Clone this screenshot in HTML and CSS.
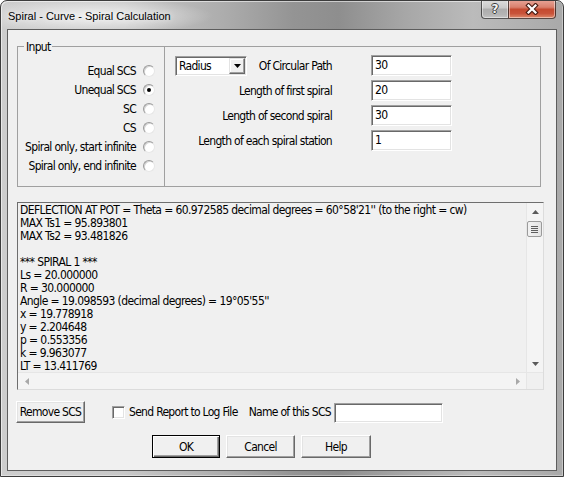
FILE: index.html
```html
<!DOCTYPE html>
<html>
<head>
<meta charset="utf-8">
<title>Spiral - Curve - Spiral Calculation</title>
<link rel="stylesheet" href="styles.css">
</head>
<body>
<div class="window">
  <div class="titlebar">
    <div class="title">Spiral - Curve - Spiral Calculation</div>
    <div class="caption-btns">
      <div class="cbtn cbtn-help"><span class="qmark">?</span></div>
      <div class="cbtn cbtn-close">
        <svg width="14" height="12" viewBox="0 0 14 12"><path d="M3.5 2.5 L10.5 9.5 M10.5 2.5 L3.5 9.5" stroke="#4a1d14" stroke-width="4.4" stroke-linecap="square"/><path d="M3.5 2.5 L10.5 9.5 M10.5 2.5 L3.5 9.5" stroke="#ffffff" stroke-width="2.2" stroke-linecap="square"/></svg>
      </div>
    </div>
  </div>
  <div class="client">
    <div class="group">
      <span class="legend">Input</span>
      <div class="radios">
        <div class="radio-row"><span>Equal SCS</span><i class="radio"></i></div>
        <div class="radio-row"><span>Unequal SCS</span><i class="radio checked"></i></div>
        <div class="radio-row"><span>SC</span><i class="radio"></i></div>
        <div class="radio-row"><span>CS</span><i class="radio"></i></div>
        <div class="radio-row"><span>Spiral only, start infinite</span><i class="radio"></i></div>
        <div class="radio-row"><span>Spiral only, end infinite</span><i class="radio"></i></div>
      </div>
      <div class="params">
        <div class="param-label first">
          <div class="combo"><span class="combo-text">Radius</span><span class="combo-btn"><svg width="7" height="4" viewBox="0 0 7 4"><polygon points="0,0 7,0 3.5,4" fill="#000"/></svg></span></div>
          <span>Of Circular Path</span>
        </div>
        <div class="edit">30</div>
        <div class="param-label">Length of first spiral</div>
        <div class="edit">20</div>
        <div class="param-label">Length of second spiral</div>
        <div class="edit">30</div>
        <div class="param-label">Length of each spiral station</div>
        <div class="edit">1</div>
      </div>
    </div>

    <div class="log">
      <div class="log-text">DEFLECTION AT POT = Theta = 60.972585 decimal degrees = 60°58'21'' (to the right = cw)
MAX Ts1 = 95.893801
MAX Ts2 = 93.481826

*** SPIRAL 1 ***
Ls = 20.000000
R = 30.000000
Angle = 19.098593 (decimal degrees) = 19°05'55''
x = 19.778918
y = 2.204648
p = 0.553356
k = 9.963077
LT = 13.411769</div>
      <div class="vscroll">
        <div class="sb-btn"><svg width="7" height="4" viewBox="0 0 7 4"><polygon points="0,4 7,4 3.5,0" fill="#5a5a5a"/></svg></div>
        <div class="vthumb"><i></i><i></i><i></i><i></i></div>
        <div class="sb-track"></div>
        <div class="sb-btn"><svg width="7" height="4" viewBox="0 0 7 4"><polygon points="0,0 7,0 3.5,4" fill="#5a5a5a"/></svg></div>
      </div>
      <div class="hscroll">
        <div class="sb-btn"><svg width="4" height="7" viewBox="0 0 4 7"><polygon points="4,0 4,7 0,3.5" fill="#a8a8a8"/></svg></div>
        <div class="sb-track"></div>
        <div class="sb-btn"><svg width="4" height="7" viewBox="0 0 4 7"><polygon points="0,0 0,7 4,3.5" fill="#a8a8a8"/></svg></div>
      </div>
      <div class="corner"></div>
    </div>

    <div class="options">
      <div class="btn btn-remove">Remove SCS</div>
      <i class="checkbox"></i>
      <span class="check-label">Send Report to Log File</span>
      <span class="name-label">Name of this SCS</span>
      <div class="edit edit-name"></div>
    </div>

    <div class="actions">
      <div class="btn btn-ok">OK</div>
      <div class="btn btn-cancel">Cancel</div>
      <div class="btn btn-help">Help</div>
    </div>
  </div>
</div>
</body>
</html>
```

FILE: styles.css
```css
html, body {
  margin: 0;
  padding: 0;
  background: #ffffff;
}

.window {
  position: relative;
  width: 564px;
  height: 477px;
  box-sizing: border-box;
  border: 1px solid #3c3c3c;
  border-radius: 7px 7px 0 0;
  overflow: hidden;
  display: flex;
  flex-direction: column;
  background:
    radial-gradient(ellipse 120px 18px at 92px 15px, rgba(255,255,255,0.75), rgba(255,255,255,0) 100%),
    linear-gradient(90deg, #cdcdcd 0%, #c8c8c8 22%, #acacac 40%, #949494 52%, #8e8e8e 60%, #a7a7a7 72%, #bbbbbb 84%, #a9a9a9 100%);
  box-shadow: inset 1px 1px 0 rgba(255,255,255,0.55), inset -1px -1px 0 rgba(255,255,255,0.35);
}

.titlebar {
  height: 28px;
  flex: none;
  display: flex;
  justify-content: space-between;
  padding: 0 7px 0 7px;
}

.title {
  font-family: "Liberation Sans", Arial, sans-serif;
  font-size: 11px;
  line-height: 13px;
  padding-top: 9px;
  color: #000;
  text-shadow: 0 0 6px rgba(255,255,255,0.9);
}

.caption-btns {
  display: flex;
  align-items: flex-start;
  margin-top: -1px;
}

.cbtn {
  height: 19px;
  box-sizing: border-box;
  border: 1px solid rgba(40,40,40,0.75);
  border-top: none;
  display: flex;
  align-items: center;
  justify-content: center;
  box-shadow: inset 0 0 0 1px rgba(255,255,255,0.45);
}

.cbtn-help {
  width: 27px;
  border-right: none;
  border-radius: 0 0 0 4px;
  background: linear-gradient(180deg, #dedede 0%, #c9c9c9 45%, #adadad 50%, #b4b4b4 80%, #c4c4c4 100%);
}

.qmark {
  font-family: "DejaVu Sans", sans-serif;
  font-weight: bold;
  font-size: 12px;
  line-height: 12px;
  color: #f4f4f4;
  text-shadow: 1px 0 0 #3a3a3a, -1px 0 0 #3a3a3a, 0 1px 0 #3a3a3a, 0 -1px 0 #3a3a3a;
}

.cbtn-close {
  width: 48px;
  border-radius: 0 0 4px 0;
  background: linear-gradient(180deg, #e8a598 0%, #d9806d 40%, #c54a30 52%, #c9533a 75%, #de8a6b 100%);
}

.cbtn-close svg { display: block; }

.client {
  box-sizing: border-box;
  height: 442px;
  margin: 0 6px;
  border: 1px solid #5d5d5d;
  background: #f0f0f0;
  padding: 16px 0 0 8px;
  font-family: "DejaVu Sans Condensed", "Liberation Sans", Arial, sans-serif;
  font-size: 12px;
  letter-spacing: -0.7px;
  color: #000;
}

.group {
  position: relative;
  margin-left: 1px;
  width: 524px;
  height: 141px;
  box-sizing: border-box;
  border: 1px solid #a0a0a0;
  display: flex;
}

.legend {
  position: absolute;
  left: 6px;
  top: -7px;
  padding: 0 2px;
  line-height: 14px;
  background: #f0f0f0;
}

.radios {
  width: 147px;
  flex: none;
  box-sizing: border-box;
  border-right: 1px solid #a0a0a0;
  padding: 14px 9px 0 0;
  display: flex;
  flex-direction: column;
  align-items: flex-end;
}

.radio-row {
  height: 19px;
  display: flex;
  align-items: center;
  gap: 7px;
  white-space: nowrap;
}

.radio {
  position: relative;
  width: 12px;
  height: 12px;
  box-sizing: border-box;
  border-radius: 50%;
  border: 1px solid;
  border-color: #9a9a9a #e6e6e6 #e6e6e6 #9a9a9a;
  background: #ffffff;
  box-shadow: inset 1px 1px 0 #d4d4d4;
}

.radio.checked::after {
  content: "";
  position: absolute;
  left: 3px;
  top: 3px;
  width: 4px;
  height: 4px;
  border-radius: 50%;
  background: #000;
}

.params {
  flex: 1;
  padding: 8px 0 0 10px;
  display: grid;
  grid-template-columns: 157px 81px;
  grid-auto-rows: 21px;
  column-gap: 39px;
  row-gap: 4px;
  align-content: start;
}

.param-label {
  display: flex;
  align-items: center;
  justify-content: flex-end;
  white-space: nowrap;
}

.param-label.first {
  justify-content: space-between;
}

.combo {
  width: 72px;
  height: 20px;
  box-sizing: border-box;
  border: 1px solid;
  border-color: #a0a0a0 #ffffff #ffffff #a0a0a0;
  box-shadow: inset 1px 1px 0 #696969, inset -1px -1px 0 #e3e3e3;
  background: #fff;
  display: flex;
  align-items: center;
  padding: 1px 1px 1px 3px;
}

.combo-text {
  flex: 1;
}

.combo-btn {
  width: 16px;
  height: 16px;
  box-sizing: border-box;
  border: 1px solid;
  border-color: #e3e3e3 #696969 #696969 #e3e3e3;
  box-shadow: inset -1px -1px 0 #a0a0a0, inset 1px 1px 0 #fff;
  background: #f0f0f0;
  display: flex;
  align-items: center;
  justify-content: center;
}

.edit {
  box-sizing: border-box;
  height: 21px;
  border: 1px solid;
  border-color: #a0a0a0 #ffffff #ffffff #a0a0a0;
  box-shadow: inset 1px 1px 0 #696969, inset -1px -1px 0 #e3e3e3;
  background: #fff;
  padding: 2px 0 0 3px;
  line-height: 14px;
}

.log {
  margin: 15px 0 0 1px;
  width: 527px;
  height: 188px;
  box-sizing: border-box;
  border: 1px solid;
  border-color: #6e6e6e #dcdcdc #dcdcdc #6e6e6e;
  display: grid;
  grid-template-columns: 1fr 17px;
  grid-template-rows: 1fr 17px;
}

.log-text {
  overflow: hidden;
  white-space: pre;
  line-height: 13px;
  padding: 1px 0 0 2px;
  letter-spacing: -0.6px;
}

.vscroll {
  display: flex;
  flex-direction: column;
  background: #f4f4f4;
  border-left: 1px solid #e6e6e6;
}

.hscroll {
  display: flex;
  background: #f4f4f4;
  border-top: 1px solid #e6e6e6;
}

.corner {
  background: #f0f0f0;
  border-top: 1px solid #e6e6e6;
  border-left: 1px solid #e6e6e6;
}

.sb-btn {
  flex: none;
  height: 17px;
  display: flex;
  align-items: center;
  justify-content: center;
}

.hscroll .sb-btn {
  height: auto;
  width: 17px;
}

.sb-track {
  flex: 1;
}

.vthumb {
  height: 16px;
  margin: 1px 1px 0 0;
  box-sizing: border-box;
  border: 1px solid #9b9b9b;
  border-radius: 2px;
  background: linear-gradient(90deg, #f2f2f2, #e4e4e4);
  display: flex;
  flex-direction: column;
  align-items: center;
  justify-content: center;
  gap: 1px;
}

.vthumb i {
  width: 7px;
  height: 1px;
  background: #5e5e5e;
}

.options {
  display: flex;
  align-items: center;
  height: 22px;
  margin-top: 11px;
  white-space: nowrap;
}

.btn {
  box-sizing: border-box;
  display: flex;
  align-items: center;
  justify-content: center;
  background: #f0f0f0;
  border: 1px solid;
  border-color: #ffffff #696969 #696969 #ffffff;
  box-shadow: inset -1px -1px 0 #a0a0a0, inset 1px 1px 0 #e3e3e3;
}

.btn-remove {
  width: 69px;
  height: 22px;
}

.checkbox {
  width: 13px;
  height: 13px;
  box-sizing: border-box;
  margin-left: 27px;
  border: 1px solid;
  border-color: #a0a0a0 #ffffff #ffffff #a0a0a0;
  box-shadow: inset 1px 1px 0 #696969, inset -1px -1px 0 #e3e3e3;
  background: #fff;
}

.check-label {
  margin-left: 4px;
}

.name-label {
  margin-left: 11px;
}

.edit-name {
  margin: 2px 0 0 3px;
  width: 109px;
  height: 20px;
}

.actions {
  display: flex;
  gap: 6px;
  margin-top: 12px;
  padding-left: 136px;
}

.actions .btn {
  height: 23px;
}

.btn-ok {
  width: 68px;
  border-color: #000;
  box-shadow: inset 1px 1px 0 #fff, inset -1px -1px 0 #696969, inset -2px -2px 0 #a0a0a0;
}

.btn-cancel {
  width: 69px;
}

.btn-help {
  width: 70px;
}
```
